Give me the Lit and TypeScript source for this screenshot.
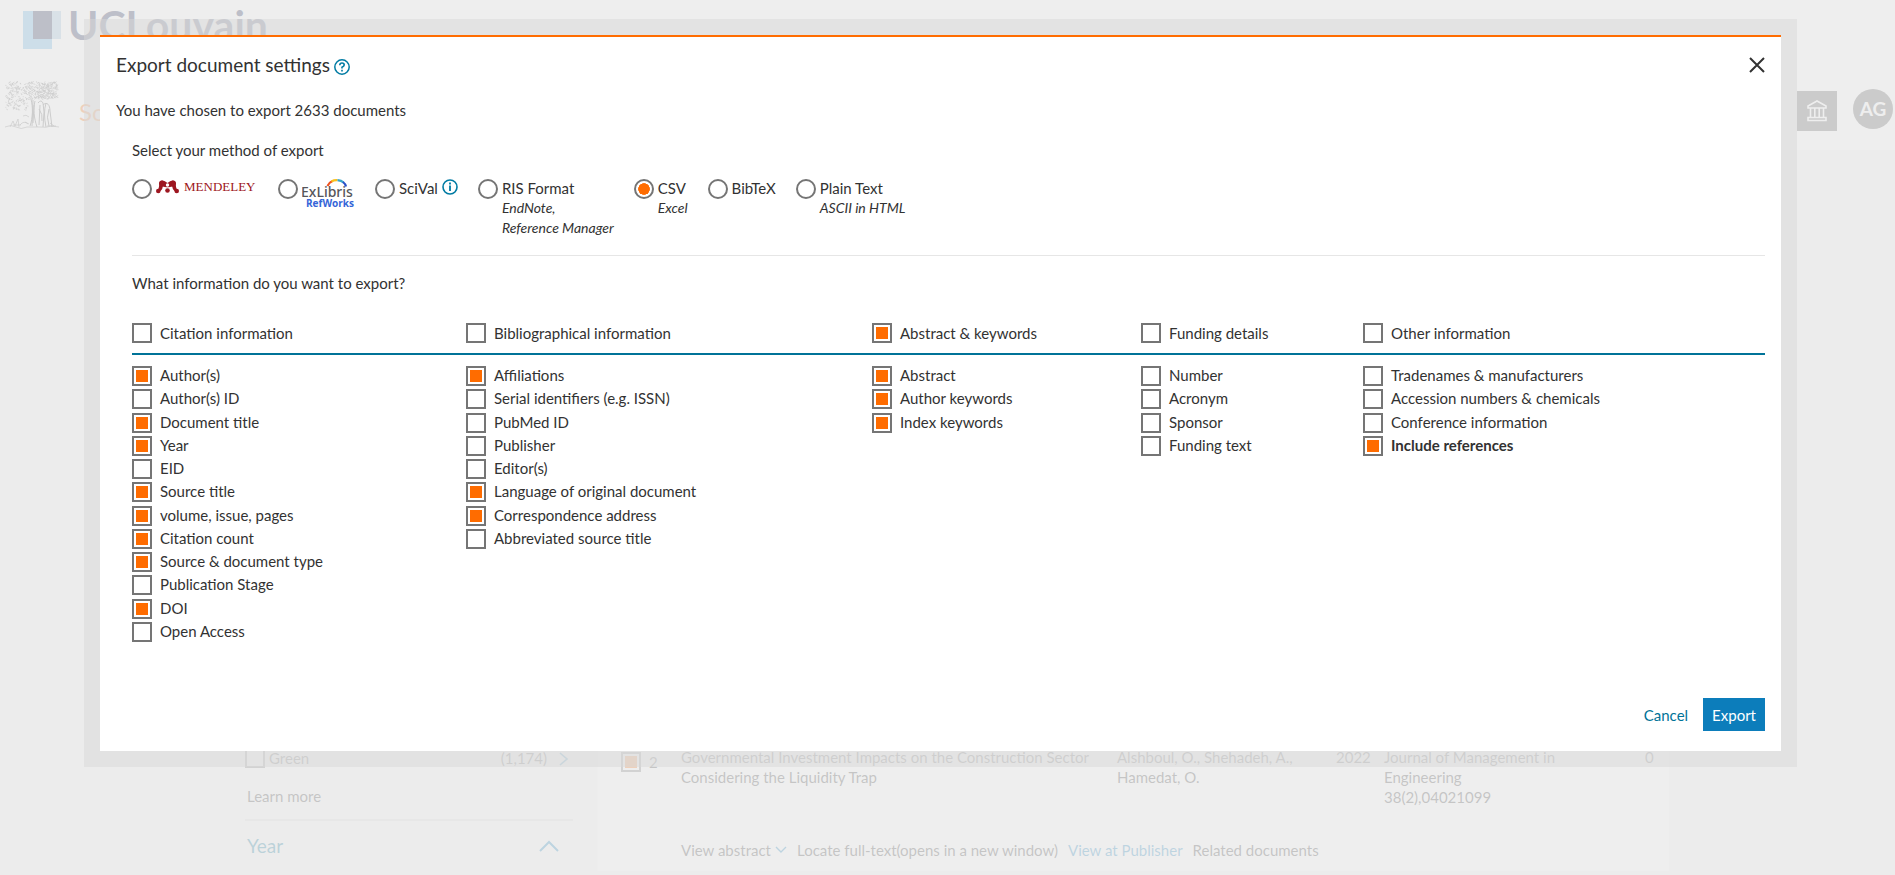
import { LitElement, html, css } from "lit";
import { customElement, property } from "lit/decorators.js";

interface Option {
  label: string;
  on?: boolean;
  strong?: boolean;
}
interface Group {
  title: string;
  on?: boolean;
  items: Option[];
}

const opt = (label: string, on = false, strong = false): Option => ({ label, on, strong });

const GROUPS: Group[] = [
  {
    title: "Citation information",
    items: [
      opt("Author(s)", true),
      opt("Author(s) ID"),
      opt("Document title", true),
      opt("Year", true),
      opt("EID"),
      opt("Source title", true),
      opt("volume, issue, pages", true),
      opt("Citation count", true),
      opt("Source & document type", true),
      opt("Publication Stage"),
      opt("DOI", true),
      opt("Open Access"),
    ],
  },
  {
    title: "Bibliographical information",
    items: [
      opt("Affiliations", true),
      opt("Serial identifiers (e.g. ISSN)"),
      opt("PubMed ID"),
      opt("Publisher"),
      opt("Editor(s)"),
      opt("Language of original document", true),
      opt("Correspondence address", true),
      opt("Abbreviated source title"),
    ],
  },
  {
    title: "Abstract & keywords",
    on: true,
    items: [opt("Abstract", true), opt("Author keywords", true), opt("Index keywords", true)],
  },
  {
    title: "Funding details",
    items: [opt("Number"), opt("Acronym"), opt("Sponsor"), opt("Funding text")],
  },
  {
    title: "Other information",
    items: [
      opt("Tradenames & manufacturers"),
      opt("Accession numbers & chemicals"),
      opt("Conference information"),
      opt("Include references", true, true),
    ],
  },
];

const controls = css`
  * {
    box-sizing: border-box;
  }
  input[type="checkbox"],
  input[type="radio"] {
    appearance: none;
    flex: none;
    width: 20px;
    height: 20px;
    margin: 0;
    padding: 2px;
    border: 2px solid #757575;
    background: #fff;
  }
  input[type="radio"] {
    border-radius: 50%;
  }
  input[type="checkbox"]:checked {
    background: #ff6c00 content-box;
  }
  input[type="radio"]:checked {
    background: radial-gradient(circle closest-side, #ff6c00 95%, transparent) content-box;
  }
  svg {
    display: block;
    flex: none;
  }
  button {
    font: inherit;
    border: 0;
    padding: 0;
    background: none;
    cursor: pointer;
  }
`;

/* ---------- Elsevier engraving ---------- */

// Small deterministic generator, so the foliage looks the same on each load.
function foliage(): string {
  let seed = 7;
  const rnd = () => {
    seed = (seed * 16807) % 2147483647;
    return seed / 2147483647;
  };
  let d = "";
  for (let i = 0; i < 420; i++) {
    const x = 1 + rnd() * 51;
    const y = 1 + rnd() * (x < 22 ? 28 : 17);
    const a = rnd() * 3 - 1.5;
    const b = rnd() * 3 - 1.5;
    d += `M${x.toFixed(1)} ${y.toFixed(1)}q${a.toFixed(1)} ${b.toFixed(1)} ${(b + 1).toFixed(1)} ${a.toFixed(1)}`;
  }
  return d;
}
const LEAVES = foliage();

@customElement("page-header")
class PageHeader extends LitElement {
  static styles = [
    controls,
    css`
      :host {
        display: block;
        height: 150px;
        padding-top: 8px;
        background: #fff;
      }
      .brand {
        display: flex;
        gap: 6px;
        padding-left: 23px;
        height: 72px;
        color: #0c1446;
        font: bold 41px/34px Lato, sans-serif;
      }
      .mark {
        margin-top: 3px;
      }
      .bar {
        display: flex;
        align-items: center;
        height: 50px;
        padding: 0 2px 0 5px;
      }
      .name {
        margin-left: 20px;
        padding-top: 14px;
        color: #ff6c00;
        font-size: 24px;
      }
      .inst {
        display: grid;
        place-items: center;
        width: 40px;
        height: 40px;
        margin-left: auto;
        margin-top: 12px;
        background: #505050;
      }
      .user {
        width: 40px;
        height: 40px;
        margin-left: 16px;
        margin-top: 8px;
        border-radius: 50%;
        background: #505050;
        color: #fff;
        font-weight: bold;
        font-size: 19px;
      }
    `,
  ];
  render() {
    return html`
      <div class="brand">
        <svg class="mark" width="39" height="38" viewBox="0 0 39 38">
          <rect width="29" height="38" fill="#5aaee4" />
          <rect x="28" width="10" height="28" fill="#94bedd" />
          <rect x="10" width="19" height="28" fill="#0a1640" />
        </svg>
        <span>UCLouvain</span>
      </div>
      <div class="bar">
        <svg width="54" height="48" viewBox="0 0 54 48" fill="none" stroke="#555" stroke-width="0.7">
          <path d=${LEAVES} />
          <path d="M26 18c2 8 2 19-1 27M30 20c-2 8-1 17 2 26M33 22q3-4 5 0l1 9-1 15M38 24c4-4 7 0 7 6l2 16M41 22q-3 10 0 24M34 28q4 5 3 12M29 24l-1 18M44 28q-3 8 0 17M28 19l-1 26M35 24l-1 20" stroke-width="1" />
          <path d="M0 46q6-3 11 0t11 0h12q8 1 12-1l8 1M5 46l3-6 2 5 3-7 1 8M15 44q4-5 8-1M18 35q3-2 6 1M45 42l4 3M8 44h8M20 41l4 2M42 45h9" />
        </svg>
        <span class="name">Scopus</span>
        <button class="inst" aria-label="Institution">
          <svg width="20" height="22" viewBox="0 0 20 22" fill="none" stroke="#fff" stroke-width="1.6">
            <path d="M1 8V6l9-5 9 5v2zM1 20.500v-3h18v3zM3.500 8v9.500M7.800 8v9.500M12.200 8v9.500M16.500 8v9.500" />
          </svg>
        </button>
        <button class="user" aria-label="Account">AG</button>
      </div>
    `;
  }
}

@customElement("results-page")
class ResultsPage extends LitElement {
  static styles = [
    controls,
    css`
      :host {
        display: flex;
        padding: 0 226px 0 245px;
        background: #f5f5f5;
        line-height: 20px;
      }
      aside {
        width: 352px;
        flex: none;
        padding: 598px 24px 0 0;
      }
      .facet {
        display: flex;
        gap: 4px;
      }
      .facet label {
        flex: 1;
      }
      .facet svg {
        margin: 4px 4px 0 8px;
      }
      a {
        color: inherit;
        text-decoration: none;
      }
      .learn {
        display: block;
        padding: 18px 2px 13px;
        border-bottom: 2px solid #dcdcdc;
      }
      .section {
        display: flex;
        justify-content: space-between;
        align-items: center;
        width: 100%;
        padding: 15px 14px 15px 2px;
        color: #007398;
        font-size: 19px;
      }
      main {
        flex: 1;
        padding: 597px 0 0 23px;
        border-left: 1px solid #fafafa;
        background: #fff;
      }
      table {
        width: 100%;
        table-layout: fixed;
        border-collapse: collapse;
      }
      td {
        padding: 0;
        vertical-align: top;
      }
      .pick {
        padding-top: 5px;
      }
      .links {
        display: flex;
        align-items: center;
        gap: 10px;
        padding-top: 33px;
        white-space: nowrap;
      }
      .abstract {
        display: flex;
        align-items: center;
        gap: 4px;
      }
      .pub {
        color: #0c7dbb;
      }
    `,
  ];
  render() {
    return html`
      <aside>
        <div class="facet">
          <input type="checkbox" id="green" /><label for="green">Green</label>
          <span>(1,174)</span>
          <svg width="10" height="14" viewBox="0 0 10 14" fill="none" stroke="#0c7dbb" stroke-width="1.6"><path d="M1 1l7 6-7 6" /></svg>
        </div>
        <a class="learn" href="#learn">Learn more</a>
        <button class="section">
          Year
          <svg width="20" height="12" viewBox="0 0 20 12" fill="none" stroke="#0c7dbb" stroke-width="2"><path d="M1 11l9-9 9 9" /></svg>
        </button>
      </aside>
      <main>
        <table>
          <colgroup>
            <col width="28" /><col width="32" /><col /><col width="219" /><col width="48" /><col width="261" /><col width="24" />
          </colgroup>
          <tbody>
            <tr>
              <td class="pick"><input type="checkbox" checked aria-label="Select document 2" /></td>
              <td class="pick">2</td>
              <td>Governmental Investment Impacts on the Construction Sector<br />Considering the Liquidity Trap</td>
              <td>Alshboul, O., Shehadeh, A.,<br />Hamedat, O.</td>
              <td>2022</td>
              <td>Journal of Management in<br />Engineering<br />38(2),04021099</td>
              <td>0</td>
            </tr>
            <tr>
              <td></td>
              <td></td>
              <td colspan="5">
                <div class="links">
                  <a class="abstract" href="#abstract">View abstract
                    <svg width="12" height="8" viewBox="0 0 12 8" fill="none" stroke="#0c7dbb" stroke-width="1.400"><path d="M1 1l5 5 5-5" /></svg></a>
                  <a href="#fulltext">Locate full-text(opens in a new window)</a>
                  <a class="pub" href="#publisher">View at Publisher</a>
                  <a href="#related">Related documents</a>
                </div>
              </td>
            </tr>
          </tbody>
        </table>
      </main>
    `;
  }
}

@customElement("export-method")
class ExportMethod extends LitElement {
  static styles = [
    controls,
    css`
      :host {
        display: block;
      }
      .methods {
        display: flex;
        align-items: flex-start;
        gap: 20px;
        margin: 0;
        padding: 0;
        border: 0;
      }
      .method {
        display: flex;
        gap: 4px;
      }
      .method label {
        display: block;
        line-height: 18px;
      }
      .row {
        display: flex;
        gap: 4px;
      }
      em {
        display: block;
        font-size: 14px;
        line-height: 20px;
      }
      .caption {
        padding-top: 1px;
      }
    `,
  ];
  private radio(id: string, content: unknown, on = false) {
    return html`<div class="method">
      <input type="radio" name="method" id=${id} ?checked=${on} />
      <label for=${id}>${content}</label>
    </div>`;
  }
  render() {
    return html`
      <fieldset class="methods" aria-label="Select your method of export">
        ${this.radio(
          "mendeley",
          html`<svg role="img" aria-label="Mendeley" width="102" height="16" viewBox="0 0 102 16">
            <g fill="#9d1620">
              <circle cx="6" cy="4.500" r="3" /><circle cx="17" cy="4.500" r="3" />
              <circle cx="2.300" cy="12" r="2.300" /><circle cx="11.500" cy="11.500" r="2.300" /><circle cx="20.700" cy="12" r="2.300" />
              <path d="M3.500 4Q4 2 6 1.600q3 .2 5.500 2.400Q14 1.800 17 1.600q2 .4 2.500 2.400.3 4 1.500 7l-2.600 1q-2-2-2.200-4.500-2.600 1-4.700.8Q9 8.500 6.800 7.500q-.2 3-2.200 4.500L2 11q1.200-3 1.500-7z" />
            </g>
            <circle cx="11.500" cy="6" r="1.700" fill="#fff" />
            <text x="28" y="12" font-family="Liberation Serif, serif" font-size="13" fill="#9d1620">MENDELEY</text>
          </svg>`
        )}
        ${this.radio(
          "refworks",
          html`<svg role="img" aria-label="ExLibris RefWorks" width="53" height="30" viewBox="0 0 53 30">
            <g fill="none" stroke-width="2.200">
              <path d="M25.500 7Q27 3.500 30 2.200" stroke="#f0531f" />
              <path d="M29.500 2.500Q32 1 35.500 1.200" stroke="#f9c01c" />
              <path d="M35.500 1.200Q39.500 1.500 41.500 3.500" stroke="#3aa6c9" />
              <path d="M41 3Q43.500 5 44 7.500" stroke="#2850c8" />
            </g>
            <text x="-1" y="18" font-family="Noto Sans, sans-serif" font-weight="500" font-size="14" fill="#56565a">ExLibris</text>
            <text x="4" y="28" font-family="Open Sans, sans-serif" font-weight="bold" font-size="10" fill="#3565d8">RefWorks</text>
          </svg>`
        )}
        ${this.radio(
          "scival",
          html`<span class="row">SciVal
            <svg role="img" aria-label="Information" width="16" height="16" viewBox="0 0 16 16" fill="none" stroke="#007ba3">
              <circle cx="8" cy="8" r="7" stroke-width="1.600" />
              <path d="M8 6.500v5.500M8 3.500v2" stroke-width="1.800" />
            </svg></span>`
        )}
        ${this.radio("ris", html`RIS Format<em class="caption">EndNote,<br />Reference Manager</em>`)}
        ${this.radio("csv", html`CSV<em class="caption">Excel</em>`, true)}
        ${this.radio("bibtex", "BibTeX")}
        ${this.radio("plain", html`Plain Text<em class="caption">ASCII in HTML</em>`)}
      </fieldset>
    `;
  }
}

@customElement("export-fields")
class ExportFields extends LitElement {
  @property({ attribute: false }) groups: Group[] = [];

  static styles = [
    controls,
    css`
      .grid {
        display: grid;
        grid-template-columns: 334fr 406fr 269fr 222fr 402fr;
      }
      .check {
        display: flex;
        gap: 8px;
        line-height: 18px;
      }
      .head {
        padding-bottom: 10px;
        border-bottom: 2px solid #007398;
        line-height: 20px;
      }
      ul {
        display: grid;
        grid-template-rows: repeat(12, 1fr);
        min-height: 279px;
        margin: 11px 0 0;
        padding: 0;
        list-style: none;
      }
      .strong {
        font-weight: bold;
      }
    `,
  ];
  private check(id: string, o: Option) {
    return html`<input type="checkbox" id=${id} ?checked=${!!o.on} />
      <label for=${id} class=${o.strong ? "strong" : ""}>${o.label}</label>`;
  }
  render() {
    return html`
      <div class="grid">
        ${this.groups.map((g, i) => html`<div class="check head">${this.check(`g${i}`, { label: g.title, on: g.on })}</div>`)}
        ${this.groups.map(
          (g, i) => html`<ul>
            ${g.items.map((o, j) => html`<li class="check">${this.check(`g${i}-${j}`, o)}</li>`)}
          </ul>`
        )}
      </div>
    `;
  }
}

@customElement("app-root")
class AppRoot extends LitElement {
  static styles = [
    controls,
    css`
      :host {
        display: block;
        position: relative;
        height: 100vh;
        overflow: hidden;
        background: #f5f5f5;
        color: #323232;
        font: 15px/20px Lato, "Open Sans", sans-serif;
      }
      .veil {
        position: absolute;
        inset: 0;
        padding: 19px 98px 0 84px;
        background: rgba(234, 234, 234, 0.8);
      }
      .frame {
        padding: 16px;
        background: rgba(216, 216, 216, 0.5);
      }
      .dialog {
        padding: 16px 16px 20px;
        border-top: 2px solid #ff6c00;
        background: #fff;
      }
      header {
        display: flex;
        align-items: center;
        gap: 4px;
        height: 24px;
      }
      h1 {
        margin: 0;
        font-weight: normal;
        font-size: 19px;
        line-height: 24px;
      }
      .close {
        margin-left: auto;
      }
      .help {
        padding-top: 4px;
      }
      .summary {
        margin: 23px 0 20px;
      }
      .body {
        padding-left: 16px;
      }
      .lead {
        margin: 0 0 19px;
      }
      .method {
        padding-bottom: 17px;
        border-bottom: 1px solid #e6e6e6;
      }
      .question {
        margin: 17px 0 30px;
      }
      footer {
        display: flex;
        justify-content: flex-end;
        align-items: center;
        gap: 15px;
        margin-top: 53px;
      }
      .cancel {
        color: #007398;
      }
      .export {
        height: 33px;
        padding: 0 9px;
        background: #0c7dbb;
        color: #fff;
      }
    `,
  ];
  render() {
    return html`
      <page-header></page-header>
      <results-page></results-page>
      <div class="veil">
        <div class="frame">
          <section class="dialog" role="dialog" aria-labelledby="title">
            <header>
              <h1 id="title">Export document settings</h1>
              <button class="help" aria-label="Help">
                <svg width="16" height="16" viewBox="0 0 16 16" fill="none" stroke="#007ba3">
                  <circle cx="8" cy="8" r="7.200" stroke-width="1.500" />
                  <path d="M5.800 6.200Q5.800 4 8 4t2.200 1.900Q10.200 7 8 8.200v1.300M8 10.700v1.800" stroke-width="1.600" />
                </svg>
              </button>
              <button class="close" aria-label="Close">
                <svg width="16" height="16" viewBox="0 0 16 16" fill="none" stroke="#323232" stroke-width="2"><path d="M1 1l14 14M15 1L1 15" /></svg>
              </button>
            </header>
            <p class="summary">You have chosen to export 2633 documents</p>
            <div class="body">
              <p class="lead">Select your method of export</p>
              <div class="method"><export-method></export-method></div>
              <p class="question">What information do you want to export?</p>
              <export-fields .groups=${GROUPS}></export-fields>
              <footer>
                <button class="cancel">Cancel</button>
                <button class="export">Export</button>
              </footer>
            </div>
          </section>
        </div>
      </div>
    `;
  }
}
